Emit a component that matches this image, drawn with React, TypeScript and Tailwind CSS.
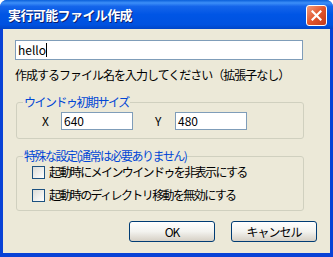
import React from "react";

const font = { fontFamily: '"Noto Sans CJK JP", "Liberation Sans", sans-serif' };

function Checkbox({ label }: { label: string }) {
  return (
    <div className="flex items-center h-[14px]">
      <div className="w-[13px] h-[13px] border border-[#1c5180] bg-gradient-to-br from-[#dcdcd7] to-[#ffffff] ml-[15px]" />
      <span className="ml-[4px] text-[12px] leading-[14px] tracking-[-1.6px] text-black whitespace-nowrap">{label}</span>
    </div>
  );
}

function Button({ label }: { label: string }) {
  return (
    <div className="w-[86px] h-[21px] rounded-[3px] border border-[#003c74] bg-gradient-to-b from-[#ffffff] via-[#f3f3ef] to-[#d6d0c5] flex items-center justify-center text-[12px] leading-[14px] text-black tracking-[-1px]">
      {label}
    </div>
  );
}

export default function App() {
  return (
    <div className="w-[333px] h-[257px] flex flex-col rounded-t-[7px] overflow-hidden bg-[#0842d6]" style={font}>
      <div className="h-[29px] flex items-center justify-between pl-[8px] pr-[6px] pt-[1px] bg-[linear-gradient(to_bottom,#0a5fda_0%,#3d8ff8_10%,#1565ea_22%,#0055e5_50%,#0052e0_85%,#0045c8_100%)]">
        <span className="text-white font-bold text-[13px] leading-[16px] tracking-[-0.6px] [text-shadow:1px_1px_0_#0a1e6e]">実行可能ファイル作成</span>
        <div className="w-[21px] h-[21px] rounded-[3px] border border-white bg-gradient-to-br from-[#f09a7a] via-[#e2552c] to-[#c2391a] flex items-center justify-center">
          <svg width="11" height="11" viewBox="0 0 11 11">
            <path d="M1.5 1.5 L9.5 9.5 M9.5 1.5 L1.5 9.5" stroke="white" strokeWidth="2.2" strokeLinecap="square" />
          </svg>
        </div>
      </div>
      <div className="flex-1 mx-[3px] mb-[4px] bg-[#ece9d8] flex flex-col pl-[12px] pr-[13px] pt-[11px]">
        <div className="w-[288px] h-[20px] border border-[#7f9db9] bg-white flex items-center pl-[2px]">
          <span className="text-[12px] leading-[14px] text-black">hello</span>
          <span className="w-[1px] h-[14px] bg-black" />
        </div>
        <div className="mt-[8px] text-[12px] leading-[14px] tracking-[-1px] text-black whitespace-nowrap">
          作成するファイル名を入力してください（拡張子なし）
        </div>
        <fieldset className="mt-[13px] ml-[1px] w-[288px] border border-[#d0d0bf] rounded-[3px] px-[6px] pt-[3px] pb-[8px]">
          <legend className="px-[1px] text-[12px] leading-[14px] tracking-[-1.5px] text-[#0046d5]">ウインドゥ初期サイズ</legend>
          <div className="flex items-center h-[18px] text-[12px] text-black">
            <span className="ml-[19px] w-[19px]">X</span>
            <div className="w-[72px] h-[18px] border border-[#7f9db9] bg-white flex items-center pl-[2px] leading-[14px]">640</div>
            <span className="ml-[22px] w-[20px]">Y</span>
            <div className="w-[72px] h-[18px] border border-[#7f9db9] bg-white flex items-center pl-[2px] leading-[14px]">480</div>
          </div>
        </fieldset>
        <fieldset className="mt-[10px] ml-[1px] w-[288px] border border-[#d0d0bf] rounded-[3px] px-[6px] pt-[2px] pb-[8px]">
          <legend className="px-[1px] text-[12px] leading-[14px] tracking-[-1.5px] text-[#0046d5]">特殊な設定(通常は必要ありません)</legend>
          <div className="flex flex-col gap-[9px] -ml-[6px]">
            <Checkbox label="起動時にメインウインドゥを非表示にする" />
            <Checkbox label="起動時のディレクトリ移動を無効にする" />
          </div>
        </fieldset>
        <div className="mt-[10px] flex justify-end gap-[16px]">
          <Button label="OK" />
          <Button label="キャンセル" />
        </div>
      </div>
    </div>
  );
}
